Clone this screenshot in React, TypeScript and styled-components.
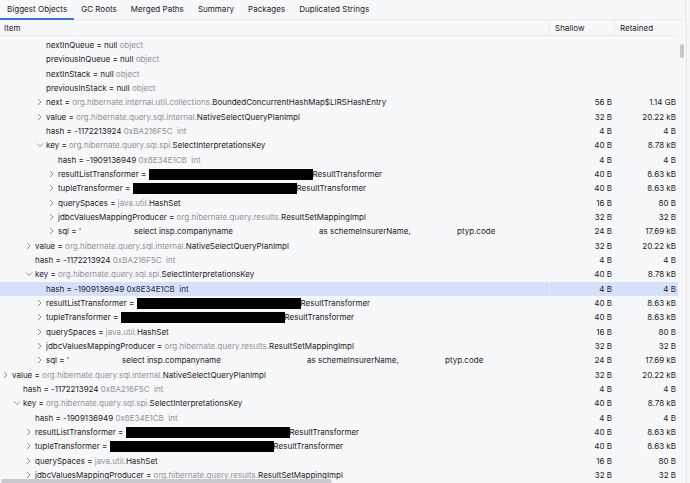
import React from "react";
import styled, { createGlobalStyle, css } from "styled-components";

const Global = createGlobalStyle`
  html, body { margin: 0; padding: 0; background: #f7f8fa; overflow: hidden; }
  body { font-family: Inter, "Noto Sans", sans-serif; -webkit-font-smoothing: antialiased; }
`;

const Frame = styled.div`
  width: 690px;
  height: 483px;
  display: flex;
  flex-direction: column;
  background: #f7f8fa;
  position: relative;
  overflow: hidden;
  font-size: 8px;
  color: #1f2023;
`;

const TabBar = styled.div`
  height: 20px;
  flex-shrink: 0;
  box-sizing: border-box;
  border-bottom: 1px solid #ebecf0;
  display: flex;
  align-items: stretch;
  width: 686px;
  border-right: 1px solid #e6e7ea;
`;

const Tab = styled.div<{ $active?: boolean }>`
  padding: 0 7px;
  display: flex;
  align-items: center;
  padding-bottom: 1px;
  box-sizing: border-box;
  position: relative;
  white-space: nowrap;
  letter-spacing: 0.03px;
  color: #1f2023;
  ${(p) =>
    p.$active &&
    css`
      &::after {
        content: "";
        position: absolute;
        left: 0;
        right: 0;
        bottom: -1px;
        height: 2px;
        background: #3574f0;
      }
    `}
`;

const Body = styled.div`
  flex: 1;
  display: flex;
  min-height: 0;
`;

const TableArea = styled.div`
  width: 680px;
  display: flex;
  flex-direction: column;
  overflow: hidden;
`;

const HeaderRow = styled.div`
  width: 678px;
  height: 16px;
  flex-shrink: 0;
  box-sizing: border-box;
  border-bottom: 1px solid #ebecf0;
  display: flex;
`;

const HeadCell = styled.div<{ $w: number; $divider?: boolean }>`
  width: ${(p) => p.$w}px;
  box-sizing: border-box;
  padding-left: ${(p) => (p.$divider ? 5 : 4)}px;
  display: flex;
  align-items: center;
  border-left: ${(p) => (p.$divider ? "1px solid #ebecf0" : "none")};
`;

const Rows = styled.div`
  padding-top: 2px;
  flex-shrink: 0;
  display: flex;
  flex-direction: column;
`;

const Row = styled.div<{ $selected?: boolean }>`
  width: 678px;
  height: 14.33px;
  flex-shrink: 0;
  display: flex;
  align-items: center;
  background: ${(p) => (p.$selected ? "#d5e1fa" : "transparent")};
`;

const ItemCell = styled.div<{ $indent: number }>`
  width: 549px;
  box-sizing: border-box;
  padding-left: ${(p) => p.$indent - 10}px;
  display: flex;
  align-items: center;
  white-space: pre;
  overflow: hidden;
  height: 100%;
`;

const NumCell = styled.div<{ $w: number; $selected?: boolean }>`
  width: ${(p) => p.$w}px;
  box-sizing: border-box;
  padding-right: 2px;
  text-align: right;
  height: 100%;
  display: flex;
  align-items: center;
  justify-content: flex-end;
  border-left: 1px solid ${(p) => (p.$selected ? "#e3eafa" : "transparent")};
`;

const ChevBox = styled.span`
  width: 10px;
  height: 8px;
  flex-shrink: 0;
  display: inline-flex;
  align-items: center;
`;

const Dim = styled.span<{ $selected?: boolean }>`
  color: ${(p) => (p.$selected ? "#2b2d31" : "#8f9297")};
`;

const Redact = styled.span<{ $w: number }>`
  display: inline-block;
  width: ${(p) => p.$w}px;
  height: 11px;
  background: #000;
`;

const Seg = styled.span<{ $w?: number }>`
  display: inline-block;
  ${(p) => (p.$w ? `width: ${p.$w}px;` : "")}
`;

const VScroll = styled.div`
  width: 7px;
  display: flex;
  flex-direction: column;
  align-items: flex-start;
  box-sizing: border-box;
  border-right: 1px solid #e6e7ea;
  margin-right: 3px;
`;

const VThumb = styled.div`
  width: 4px;
  height: 14px;
  margin-top: 24px;
  border-radius: 2px;
  background: #c6c8cc;
`;

const HThumb = styled.div`
  position: absolute;
  left: 1px;
  bottom: 0;
  width: 331px;
  height: 4px;
  border-radius: 2px;
  background: #c9cbcf;
`;

type Part =
  | { t: string; dim?: boolean; w?: number }
  | { redact: number };

type RowData = {
  x: number;
  chev?: "right" | "down";
  parts: Part[];
  sh?: string;
  re?: string;
  sel?: boolean;
};

const Chevron = ({ dir }: { dir?: "right" | "down" }) => (
  <ChevBox>
    {dir && (
      <svg width="8" height="8" viewBox="0 0 8 8" fill="none">
        {dir === "right" ? (
          <polyline points="2,1 5,4 2,7" stroke="#818489" strokeWidth="0.9" />
        ) : (
          <polyline points="1,2.5 4,5.5 7,2.5" stroke="#818489" strokeWidth="0.9" />
        )}
      </svg>
    )}
  </ChevBox>
);

const valueParts: Part[] = [
  { t: "value = " },
  { t: "org.hibernate.query.sql.internal.", dim: true },
  { t: "NativeSelectQueryPlanImpl" },
];
const hashA: Part[] = [{ t: "hash = -1172213924 " }, { t: "0xBA216F5C  int", dim: true }];
const hashB: Part[] = [{ t: "hash = -1909136949 " }, { t: "0x8E34E1CB  int", dim: true }];
const keyParts: Part[] = [
  { t: "key = " },
  { t: "org.hibernate.query.sql.spi.", dim: true },
  { t: "SelectInterpretationsKey" },
];
const resultList: Part[] = [
  { t: "resultListTransformer = " },
  { redact: 164 },
  { t: "ResultTransformer" },
];
const tuple: Part[] = [{ t: "tupleTransformer = " }, { redact: 164 }, { t: "ResultTransformer" }];
const qs: Part[] = [{ t: "querySpaces = " }, { t: "java.util.", dim: true }, { t: "HashSet" }];
const jdbc: Part[] = [
  { t: "jdbcValuesMappingProducer = " },
  { t: "org.hibernate.query.results.", dim: true },
  { t: "ResultSetMappingImpl" },
];
const sql: Part[] = [
  { t: "sql = '", w: 76 },
  { t: "select insp.companyname", w: 185 },
  { t: "as schemeInsurerName,", w: 138 },
  { t: "ptyp.code" },
];

const rows: RowData[] = [
  { x: 46, parts: [{ t: "nextInQueue = null " }, { t: "object", dim: true }] },
  { x: 46, parts: [{ t: "previousInQueue = null " }, { t: "object", dim: true }] },
  { x: 46, parts: [{ t: "nextInStack = null " }, { t: "object", dim: true }] },
  { x: 46, parts: [{ t: "previousInStack = null " }, { t: "object", dim: true }] },
  {
    x: 46,
    chev: "right",
    parts: [
      { t: "next = " },
      { t: "org.hibernate.internal.util.collections.", dim: true },
      { t: "BoundedConcurrentHashMap$LIRSHashEntry" },
    ],
    sh: "56 B",
    re: "1.14 GB",
  },
  { x: 46, chev: "right", parts: valueParts, sh: "32 B", re: "20.22 kB" },
  { x: 46, parts: hashA, sh: "4 B", re: "4 B" },
  { x: 46, chev: "down", parts: keyParts, sh: "40 B", re: "8.78 kB" },
  { x: 58, parts: hashB, sh: "4 B", re: "4 B" },
  { x: 58, chev: "right", parts: resultList, sh: "40 B", re: "8.63 kB" },
  { x: 58, chev: "right", parts: tuple, sh: "40 B", re: "8.63 kB" },
  { x: 58, chev: "right", parts: qs, sh: "16 B", re: "80 B" },
  { x: 58, chev: "right", parts: jdbc, sh: "32 B", re: "32 B" },
  { x: 58, chev: "right", parts: sql, sh: "24 B", re: "17.69 kB" },
  { x: 35, chev: "right", parts: valueParts, sh: "32 B", re: "20.22 kB" },
  { x: 35, parts: hashA, sh: "4 B", re: "4 B" },
  { x: 35, chev: "down", parts: keyParts, sh: "40 B", re: "8.78 kB" },
  { x: 46, parts: hashB, sh: "4 B", re: "4 B", sel: true },
  { x: 46, chev: "right", parts: resultList, sh: "40 B", re: "8.63 kB" },
  { x: 46, chev: "right", parts: tuple, sh: "40 B", re: "8.63 kB" },
  { x: 46, chev: "right", parts: qs, sh: "16 B", re: "80 B" },
  { x: 46, chev: "right", parts: jdbc, sh: "32 B", re: "32 B" },
  { x: 46, chev: "right", parts: sql, sh: "24 B", re: "17.69 kB" },
  { x: 12, chev: "right", parts: valueParts, sh: "32 B", re: "20.22 kB" },
  { x: 23, parts: hashA, sh: "4 B", re: "4 B" },
  { x: 23, chev: "down", parts: keyParts, sh: "40 B", re: "8.78 kB" },
  { x: 35, parts: hashB, sh: "4 B", re: "4 B" },
  { x: 35, chev: "right", parts: resultList, sh: "40 B", re: "8.63 kB" },
  { x: 35, chev: "right", parts: tuple, sh: "40 B", re: "8.63 kB" },
  { x: 35, chev: "right", parts: qs, sh: "16 B", re: "80 B" },
  { x: 35, chev: "right", parts: jdbc, sh: "32 B", re: "32 B" },
];

const tabs = ["Biggest Objects", "GC Roots", "Merged Paths", "Summary", "Packages", "Duplicated Strings"];

export default function App() {
  return (
    <Frame>
      <Global />
      <TabBar>
        {tabs.map((t, i) => (
          <Tab key={t} $active={i === 0}>
            {t}
          </Tab>
        ))}
      </TabBar>
      <Body>
        <TableArea>
          <HeaderRow>
            <HeadCell $w={549}>Item</HeadCell>
            <HeadCell $w={65} $divider>
              Shallow
            </HeadCell>
            <HeadCell $w={64} $divider>
              Retained
            </HeadCell>
          </HeaderRow>
          <Rows>
            {rows.map((r, i) => (
              <Row key={i} $selected={r.sel}>
                <ItemCell $indent={r.x}>
                  <Chevron dir={r.chev} />
                  {r.parts.map((p, j) =>
                    "redact" in p ? (
                      <Redact key={j} $w={p.redact} />
                    ) : p.dim ? (
                      <Dim key={j} $selected={r.sel}>
                        {p.t}
                      </Dim>
                    ) : (
                      <Seg key={j} $w={p.w}>
                        {p.t}
                      </Seg>
                    )
                  )}
                </ItemCell>
                <NumCell $w={65} $selected={r.sel}>
                  {r.sh}
                </NumCell>
                <NumCell $w={64} $selected={r.sel}>
                  {r.re}
                </NumCell>
              </Row>
            ))}
          </Rows>
        </TableArea>
        <VScroll>
          <VThumb />
        </VScroll>
      </Body>
      <HThumb />
    </Frame>
  );
}
